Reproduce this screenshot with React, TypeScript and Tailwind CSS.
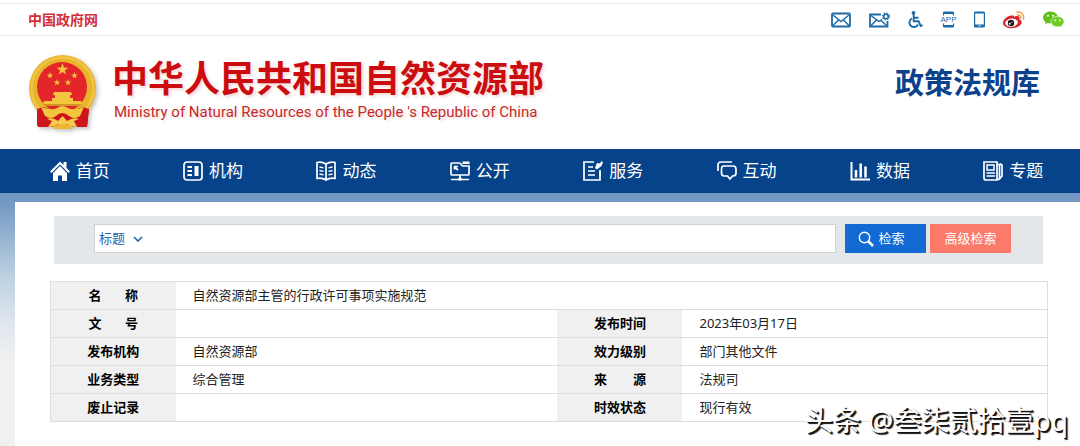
import React from 'react';

const STAR = '0,-5 1.2,-1.6 4.8,-1.5 1.9,0.6 2.9,4 0,2 -2.9,4 -1.9,0.6 -4.8,-1.5 -1.2,-1.6';

function Emblem() {
  return (
    <svg viewBox="0 0 72 78" className="w-[72px] h-[78px] flex-shrink-0 drop-shadow-[2px_2px_2px_rgba(0,0,0,0.25)]" aria-hidden="true">
      <path d="M9 52L61 52L59 72Q51 70 46 73H24Q19 70 10 72Z" fill="#c8101a" />
      <path d="M9 53l9 5-2 12-7 2zM61 53l-9 5 2 12 5 2z" fill="#dc1f25" />
      <circle cx="34.500" cy="34.500" r="33.500" fill="#e9b42c" />
      <circle cx="34.500" cy="34.500" r="31" fill="none" stroke="#f0c444" strokeWidth="2.500" />
      <circle cx="34" cy="33" r="25" fill="#e4252a" />
      <g fill="#f4c63e">
        <polygon points={STAR} transform="translate(34.500 15.500) scale(1.250)" />
        <polygon points={STAR} transform="translate(22 21.500) scale(0.700)" />
        <polygon points={STAR} transform="translate(46.500 21.500) scale(0.700)" />
        <polygon points={STAR} transform="translate(29 28.500) scale(0.700)" />
        <polygon points={STAR} transform="translate(40 28.500) scale(0.700)" />
        <path d="M26 38h17l1 3H25zM27 41h15v3h3v3h8l1 3H15l1-3h8v-3h3z" />
      </g>
      <path d="M15 50h39l-3 2H18z" fill="#cf9424" />
      <path d="M9 55L15 53Q24 57 29 54Q34 50 40 54Q46 57 55 53L61 55L59 73L10 73Z" fill="#cf151c" />
      <path d="M13 53Q24 57 29 54Q34 50 40 54Q46 57 56 53L52 62Q46 66 41 62Q34 56 28 62Q23 66 17 62Z" fill="#f2c53f" />
      <path d="M19 65Q25 63 30 67L34.500 62L39 67Q45 63 51 65L46 67L49 73Q42 73 39 70L34.500 74L30 70Q27 73 20 73L24 67Z" fill="#f4cb4a" />
      <path d="M26 72Q34 68 44 72V75H26Z" fill="#efb632" />
    </svg>
  );
}

function MailIcon() {
  return (
    <svg viewBox="0 0 20 16" className="w-5 h-4" fill="none" stroke="#1d6ba6" strokeWidth="1.800">
      <rect x="1" y="1.500" width="18" height="13" rx="1" />
      <path d="M2 3l8 6.500L18 3M2 13.500L7.500 8M18 13.500L12.500 8" strokeWidth="1.500" />
    </svg>
  );
}

function MailGearIcon() {
  return (
    <svg viewBox="0 0 21 16" className="w-[21px] h-4" fill="none" stroke="#1d6ba6" strokeWidth="1.800">
      <path d="M12 2.500H1v12h17.500V9" />
      <path d="M2 3.500l8 6 3-2M2 13.500L7.500 8M17.500 13.500L12 8.500" strokeWidth="1.500" />
      <circle cx="17" cy="4.500" r="2.300" strokeWidth="1.500" />
      <circle cx="17" cy="4.500" r="3.500" strokeWidth="1.100" strokeDasharray="1.400 1.350" />
    </svg>
  );
}

function WheelchairIcon() {
  return (
    <svg viewBox="0 0 15 17" className="w-[15px] h-[17px]" fill="none" stroke="#1d6ba6" strokeWidth="1.900">
      <circle cx="5.500" cy="2" r="1.900" fill="#1d6ba6" stroke="none" />
      <path d="M5.700 4v6.300h5l2 4.700 2-.8M6 6.700h4.500" />
      <path d="M4 7.500A4.500 4.500 0 1 0 10 13.500" />
    </svg>
  );
}

function AppIcon() {
  return (
    <svg viewBox="0 0 15 17" className="w-[15px] h-[17px] overflow-visible">
      <path d="M2.500 4.500V2a1 1 0 0 1 1-1h8a1 1 0 0 1 1 1v2.500M2.500 12.500V15a1 1 0 0 0 1 1h8a1 1 0 0 0 1-1v-2.500" fill="none" stroke="#1d6ba6" strokeWidth="1.200" />
      <path d="M2.500 1h10v2h-10zM2.500 14h10v2h-10z" fill="#1d6ba6" />
      <text x="7.500" y="11.300" textAnchor="middle" className="font-['Liberation_Sans',sans-serif] text-[8px]" fill="#1d6ba6">APP</text>
    </svg>
  );
}

function PhoneIcon() {
  return (
    <svg viewBox="0 0 11 17" className="w-[11px] h-[17px]">
      <rect x=".6" y="1" width="9.800" height="15" rx="1" fill="none" stroke="#1d6ba6" strokeWidth="1.200" />
      <path d="M.6 1h9.800v1.500H.6zM.6 13.500h9.800V16H.6z" fill="#1d6ba6" />
      <path d="M4.500 14.800h2" stroke="#fff" />
    </svg>
  );
}

function WeiboIcon() {
  return (
    <svg viewBox="0 0 22 18" className="w-[22px] h-[18px]">
      <path d="M8 4.500C5 4.500 0 8.500 0 12c0 3.200 4.200 5.300 8.700 5.300 6 0 10-3.300 10-6 0-1.700-1.300-2.500-2.500-2.800.6-1.700.5-3-1-3.300-1.400-.3-3 .2-4 .7.300-1.300-.8-1.500-3.200-1.400z" fill="#d9242c" />
      <ellipse cx="8.500" cy="11.700" rx="6.300" ry="4.200" fill="#fff" transform="rotate(-8 8.500 11.700)" />
      <circle cx="8" cy="12" r="3.200" fill="#16100f" />
      <circle cx="6.800" cy="12.800" r="1" fill="#fff" />
      <circle cx="9" cy="11.200" r=".6" fill="#fff" />
      <path d="M14 1.200c4.200-1 7.600 2.500 6.400 6.800M14.500 4c2.300-.4 3.800 1.200 3.200 3.200" fill="none" stroke="#f09a3a" strokeWidth="1.400" strokeLinecap="round" />
    </svg>
  );
}

function WechatIcon() {
  return (
    <svg viewBox="0 0 21 17" className="w-[21px] h-[17px]">
      <path d="M7.500.5C3.400.5 0 3.100 0 6.500c0 1.900 1 3.500 2.700 4.600L2 13.300l2.700-1.400c1 .3 1.800.4 2.800.4 4 0 7.500-2.600 7.500-5.800S11.600.5 7.500.5z" fill="#62c01c" />
      <circle cx="5" cy="4.700" r="1" fill="#fff" />
      <circle cx="10" cy="4.700" r="1" fill="#fff" />
      <path d="M14.500 5.500c-3.700 0-6.500 2.300-6.500 5.200 0 3 2.900 5.200 6.500 5.200.8 0 1.500-.1 2.200-.3l2.300 1.200-.6-1.900c1.600-1 2.600-2.500 2.600-4.200 0-2.900-2.900-5.200-6.500-5.200z" fill="#6fcb25" stroke="#fff" strokeWidth=".6" />
      <circle cx="12.300" cy="9.300" r=".9" fill="#fff" />
      <circle cx="16.700" cy="9.300" r=".9" fill="#fff" />
    </svg>
  );
}

const topLinks = [
  { label: '邮箱', icon: <MailIcon /> },
  { label: '邮件设置', icon: <MailGearIcon /> },
  { label: '无障碍', icon: <WheelchairIcon /> },
  { label: '客户端', icon: <AppIcon /> },
  { label: '手机版', icon: <PhoneIcon /> },
  { label: '微博', icon: <WeiboIcon /> },
  { label: '微信', icon: <WechatIcon /> },
];

const navItems = [
  {
    label: '首页',
    icon: (
      <>
        <path d="M0 10.500L10 .5l3.500 3.500V1H16.500V7l3.500 3.500-1.500 1.500L10 3.600l-8.500 8.400z" fill="currentColor" stroke="none" />
        <path d="M3 12L10 5l7 7V20H12v-5.500H8V20H3z" fill="currentColor" stroke="none" />
      </>
    ),
  },
  {
    label: '机构',
    icon: (
      <>
        <rect x="1" y="1" width="18" height="18" rx="3" />
        <path d="M4.500 6H9M4.500 10H9M4.500 14H9" strokeWidth="2" />
        <path d="M11.500 5h4v10h-4z" fill="currentColor" stroke="none" />
      </>
    ),
  },
  {
    label: '动态',
    icon: (
      <>
        <path d="M10 3Q6 .5 1 1.500V17.500Q6 16.500 10 19Q14 16.500 19 17.500V1.500Q14 .5 10 3V19" />
        <path d="M3.500 6l4 .8M3.500 9.500l4 .8M3.500 13l4 .8M16.500 6l-4 .8M16.500 9.500l-4 .8M16.500 13l-4 .8" strokeWidth="1.300" />
      </>
    ),
  },
  {
    label: '公开',
    icon: (
      <>
        <path d="M10 2H2Q1 2 1 3v10q0 1 1 1h16q1 0 1-1V5H12.500L10 2" />
        <path d="M12.500 .5h7v2.500h-7z" fill="currentColor" stroke="none" />
        <path d="M8 9L4.500 6M4.500 8.500V5.500H8M10 14v4M1 18.500h18" />
        <circle cx="10" cy="18" r="1.800" fill="currentColor" stroke="none" />
      </>
    ),
  },
  {
    label: '服务',
    icon: (
      <>
        <path d="M11 1H1v18h16v-8" />
        <path d="M5 6h5M5 10h7M5 14h7M17 15V9" />
        <path d="M12 7l2-5 3 .5L18.500 0 20 1.500 18.500 5 14 8.500z" fill="currentColor" stroke="none" />
      </>
    ),
  },
  {
    label: '互动',
    icon: (
      <>
        <path d="M1 10V4q0-3 3-3h11" />
        <path d="M7 5h9q3 0 3 3v4q0 3-3 3h-.5L13 18l-2.500-3H7q-2.500 0-2.500-3V8Q4.500 5 7 5z" />
      </>
    ),
  },
  {
    label: '数据',
    icon: (
      <>
        <path d="M1.500 1v17.500H20" strokeWidth="2" />
        <path d="M6 9v7.500M10.700 2.500v14M15.500 5.500v11" strokeWidth="2.500" />
      </>
    ),
  },
  {
    label: '专题',
    icon: (
      <>
        <path d="M1 1h13v18H3q-2 0-2-2zM14 3l2.500 1v14L14 19M16.500 2.500L19 4v11l-2.500 3" />
        <path d="M4 4h7v5H4z" strokeWidth="1.500" />
        <path d="M3.500 12H12M3.500 15H12" strokeWidth="1.300" />
      </>
    ),
  },
];

const rows = [
  ['文       号', '', '发布时间', '2023年03月17日'],
  ['发布机构', '自然资源部', '效力级别', '部门其他文件'],
  ['业务类型', '综合管理', '来　　源', '法规司'],
  ['废止记录', '', '时效状态', '现行有效'],
];

const th = 'h-7 bg-[#f0f0f0] border-y border-[#dedede] pt-0 px-0 pb-0.5 text-center font-bold whitespace-pre text-black';
const td = 'h-7 border-y border-[#dedede] pt-0 pb-0.5 pl-[17px] text-[#222]';

export default function App() {
  return (
    <div className="relative flex flex-col min-h-screen bg-white font-['Noto_Sans','Noto_Sans_CJK_SC',sans-serif]">
      <div className="mt-[3px] h-[33px] flex items-center justify-between pl-7 pr-4 border-y border-[#ededed]">
        <a href="#" className="pb-0.5 text-sm font-bold text-[#d2303a] font-['Noto_Sans_CJK_SC',sans-serif]">中国政府网</a>
        <div className="flex items-center gap-[18px]">
          {topLinks.map((link) => (
            <a key={link.label} href="#" aria-label={link.label}>
              {link.icon}
            </a>
          ))}
        </div>
      </div>

      <header className="h-[113px] flex items-center justify-between pl-7 pr-10">
        <div className="flex items-center gap-3">
          <Emblem />
          <div className="pb-2.5 [text-shadow:2px_2px_3px_rgba(190,60,50,0.2)]">
            <h1 className="text-[36px] leading-[48px] font-bold text-[#cb0d10] font-['Noto_Sans_CJK_SC',sans-serif]">中华人民共和国自然资源部</h1>
            <p className="pl-0.5 text-[15px] leading-6 text-[#c42a2b] font-['Roboto',sans-serif]">Ministry of Natural Resources of the People 's Republic of China</p>
          </div>
        </div>
        <h2 className="pb-6 text-[29px] leading-10 font-bold text-[#0b428b] font-['Noto_Sans_CJK_SC',sans-serif]">政策法规库</h2>
      </header>

      <nav className="h-11 grid grid-cols-8 pl-[13px] bg-[#06438a] text-white">
        {navItems.map((item) => (
          <a key={item.label} href="#" className="flex items-center justify-center gap-1.5 text-[17px]">
            <svg viewBox="0 0 20 20" className="w-5 h-5" fill="none" stroke="currentColor" strokeWidth="1.700">
              {item.icon}
            </svg>
            {item.label}
          </a>
        ))}
      </nav>

      <div className="flex-1 flex flex-col pl-[15px] pt-[9px] bg-[#f0f0f0] bg-[linear-gradient(180deg,#7398c3_0px,#7398c3_9px,#b9cfdf_80px,#dfe6ee_130px,#f0f0f0_165px)]">
        <main className="flex-1 bg-white pt-3.5">
          <form className="ml-[39px] mr-[37px] h-12 flex items-start pt-2 pl-10 pr-8 bg-[#e3e7ea]">
            <div className="flex-1 h-[29px] flex items-center border border-[#cfd3d6] bg-white">
              <div className="relative flex items-center">
                <select aria-label="检索范围" className="w-[50px] h-[26px] appearance-none bg-transparent pl-1 text-[13px] text-[#2565ae]">
                  <option>标题</option>
                </select>
                <svg viewBox="0 0 10 6" className="absolute right-0.5 w-2.5 h-1.5 pointer-events-none" fill="none" stroke="#2565ae" strokeWidth="1.600">
                  <path d="M1 1l4 4 4-4" />
                </svg>
              </div>
              <input type="text" aria-label="检索词" className="flex-1 h-[26px] px-2 text-[13px] outline-none" />
            </div>
            <button type="button" className="ml-[9px] w-[81px] h-[29px] flex items-center justify-center gap-1 pr-2 bg-[#126ad2] text-[13px] text-white">
              <svg viewBox="0 0 16 16" className="w-4 h-4" fill="none" stroke="currentColor">
                <circle cx="6.500" cy="6.500" r="5.200" strokeWidth="1.400" />
                <path d="M10.500 10.500L15 15" strokeWidth="2.500" />
              </svg>
              检索
            </button>
            <button type="button" className="ml-1 w-[81px] h-[29px] bg-[#fc7a69] text-[13px] text-white">高级检索</button>
          </form>

          <div className="mt-[17px] ml-[35px] mr-8">
            <table className="w-full table-fixed border-collapse border border-[#dedede] text-[13px] leading-5">
              <colgroup>
                <col className="w-[125px]" />
                <col />
                <col className="w-[125px]" />
                <col className="w-[365px]" />
              </colgroup>
              <tbody>
                <tr>
                  <th scope="row" className={th}>{'名       称'}</th>
                  <td colSpan={3} className={td}>自然资源部主管的行政许可事项实施规范</td>
                </tr>
                {rows.map(([leftLabel, leftValue, rightLabel, rightValue]) => (
                  <tr key={leftLabel}>
                    <th scope="row" className={th}>{leftLabel}</th>
                    <td className={td}>{leftValue}</td>
                    <th scope="row" className={th}>{rightLabel}</th>
                    <td className={td}>{rightValue}</td>
                  </tr>
                ))}
              </tbody>
            </table>
          </div>
        </main>
      </div>

      {/* Marca de autor sobre la página */}
      <p className="absolute right-3 bottom-1.5 text-[28px] leading-10 text-white whitespace-nowrap [text-shadow:1px_1px_0_#111,2px_2px_1px_#111]">
        头条 @叁柒贰拾壹pq
      </p>
    </div>
  );
}
